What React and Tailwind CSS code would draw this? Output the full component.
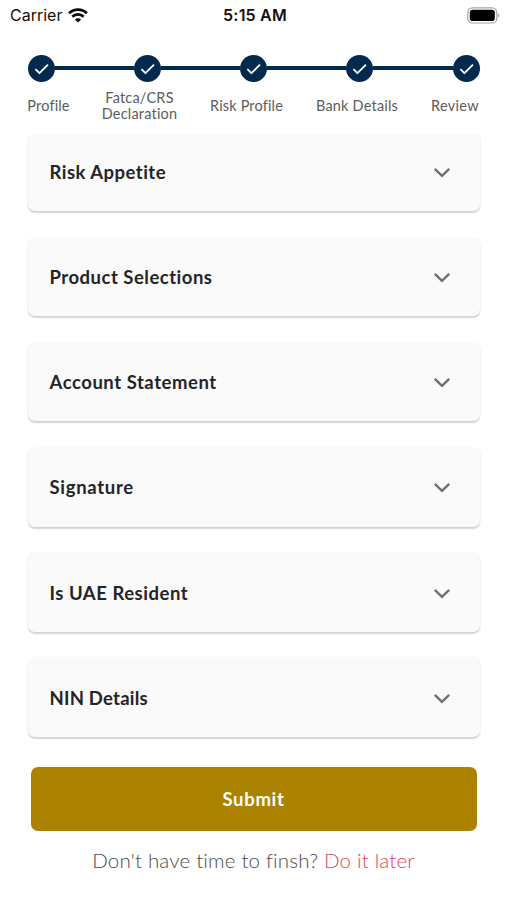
import React from 'react';

const STEPS = [
  { label: 'Profile', className: 'w-[42px] tracking-[0.15px]' },
  { label: 'Fatca/CRS Declaration', className: 'w-[76px] tracking-[0.2px]' },
  { label: 'Risk Profile', className: 'w-[74px] tracking-[0.15px]' },
  { label: 'Bank Details', className: 'w-[83px] tracking-[0.2px]' },
  { label: 'Review', className: 'w-[49px] tracking-[0.3px]' },
];

const SECTIONS = [
  { title: 'Risk Appetite', className: 'tracking-[0.48px]' },
  { title: 'Product Selections', className: 'tracking-[0.5px]' },
  { title: 'Account Statement', className: 'tracking-[0.54px]' },
  { title: 'Signature', className: 'tracking-[0.7px]' },
  { title: 'Is UAE Resident', className: 'tracking-[0.52px]' },
  { title: 'NIN Details', className: 'tracking-[0.22px]' },
];

const WifiIcon = () => (
  <svg width="20" height="15" viewBox="0 0 20 15" fill="none" stroke="#0a0a0a" strokeWidth="2.8">
    <path d="M1.1 5.2a12.7 12.7 0 0 1 17.8 0" />
    <path d="M4.3 8.7a8.1 8.1 0 0 1 11.4 0" />
    <path d="M10 14.6 6.9 11.5a4.4 4.4 0 0 1 6.2 0Z" fill="#0a0a0a" stroke="none" />
  </svg>
);

const BatteryIcon = () => (
  <svg width="33" height="17" viewBox="0 0 33 17">
    <rect x="0.8" y="0.8" width="29" height="15.2" rx="4.6" fill="none" stroke="#a6a6a6" strokeWidth="1.2" />
    <rect x="2.8" y="2.8" width="25" height="11.2" rx="2.8" fill="#000" />
    <path d="M31.2 6.2c1.5.5 1.5 3.9 0 4.4Z" fill="#a6a6a6" />
  </svg>
);

const CheckIcon = () => (
  <svg width="27" height="27" viewBox="0 0 27 27" fill="none" stroke="#fff" strokeWidth="1.8" strokeLinecap="round" strokeLinejoin="round">
    <path d="m7.9 14.6 3.5 3.6 8.1-8" />
  </svg>
);

const ChevronIcon = () => (
  <svg width="18" height="12" viewBox="0 0 18 12" fill="none" stroke="#707070" strokeWidth="2.4">
    <path d="m1.8 1.8 7.2 7.1 7.2-7.1" />
  </svg>
);

const StatusBar = () => (
  <div className="flex h-[30px] items-center justify-between pl-[10px] pr-[9px] font-[Inter,sans-serif] text-[16px] text-[#111]">
    <div className="flex flex-1 items-center gap-[6px]">
      <span>Carrier</span>
      <WifiIcon />
    </div>
    <span className="font-semibold tracking-[0.2px]">5:15 AM</span>
    <div className="-mr-[2px] flex flex-1 justify-end">
      <BatteryIcon />
    </div>
  </div>
);

const Stepper = () => (
  <div className="px-[27.5px] pt-[24.5px]">
    <div className="flex items-center">
      {STEPS.map((step, i) => (
        <React.Fragment key={step.label}>
          {i > 0 && <span className="h-1 flex-1 bg-[#02294e]" />}
          <span className="size-[27px] shrink-0 rounded-full bg-[#02294e]">
            <CheckIcon />
          </span>
        </React.Fragment>
      ))}
    </div>
    <div className="mt-2 flex h-8 items-center justify-between text-center text-[14.5px] leading-[16px] text-[#5c5c5c]">
      {STEPS.map((step) => (
        <span key={step.label} className={`flex justify-center ${step.className}`}>
          {step.label}
        </span>
      ))}
    </div>
  </div>
);

const Section = ({ title, className }) => (
  <button
    type="button"
    className="flex h-[78.6px] w-full shrink-0 items-center justify-between rounded-[7px] bg-[#fafafa] pt-[2px] pl-[22px] pr-[29px] text-left shadow-[0_1.5px_1.5px_rgba(0,0,0,0.16),0_0_3px_rgba(0,0,0,0.05)]"
  >
    <span className={`text-[18.5px] font-bold text-[#242428] ${className}`}>{title}</span>
    <ChevronIcon />
  </button>
);

const App = () => (
  <div className="flex h-[900px] w-[507px] flex-col overflow-hidden bg-white font-[Lato,sans-serif]">
    <StatusBar />
    <Stepper />
    <div className="mt-[13px] overflow-hidden px-[27.5px] pb-[29.5px]">
      <div className="-mt-[2px] flex flex-col gap-[26.6px]">
        {SECTIONS.map((section) => (
          <Section key={section.title} {...section} />
        ))}
      </div>
    </div>
    <div className="px-[30.5px]">
      <button type="button" className="h-[64px] w-full rounded-[7px] bg-[#ab8300] pt-[2px] text-[18.5px] font-bold tracking-[0.7px] text-white">
        Submit
      </button>
    </div>
    <p className="mt-[15px] text-center text-[20.5px] leading-7 font-light tracking-[0.18px] text-[#4a4a4a] [font-variant-ligatures:none]">
      Don't have time to finsh? <a className="text-[#dc4560]">Do it later</a>
    </p>
  </div>
);

export default App;
